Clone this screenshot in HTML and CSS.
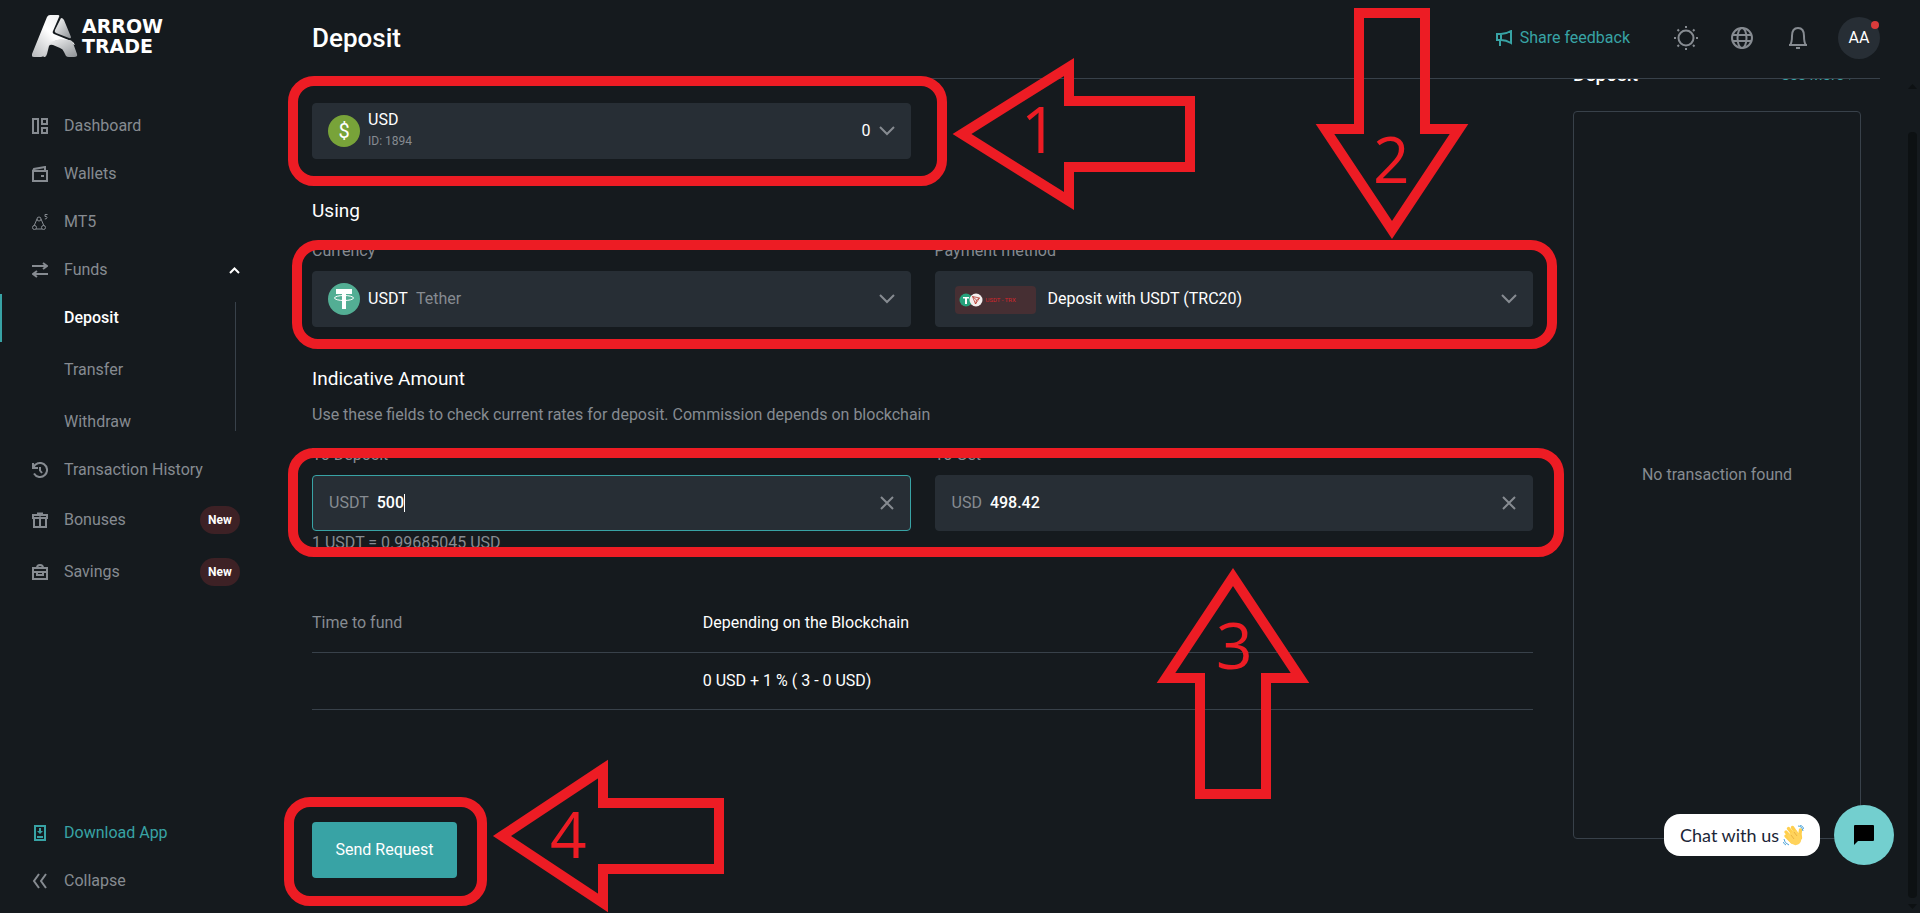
FILE: index.html
```html
<!DOCTYPE html>
<html lang="en">
<head>
  <meta charset="UTF-8">
  <title>Arrow Trade - Deposit</title>
  <meta name="viewport" content="width=device-width,initial-scale=1">
  <link rel="stylesheet" href="styles.css">
</head>
<body>
  <div class="app">
    <aside class="sidebar">
      <a class="logo" href="#">
        <svg width="46" height="42" viewBox="0 0 46 42" aria-hidden="true">
          <defs>
            <linearGradient id="logoLeft" x1="0" y1="1" x2="1" y2="0">
              <stop offset="0" stop-color="#b4b7ba"/><stop offset="0.5" stop-color="#ffffff"/><stop offset="1" stop-color="#e8eaeb"/>
            </linearGradient>
            <linearGradient id="logoRight" x1="0" y1="0" x2="1" y2="1">
              <stop offset="0" stop-color="#ffffff"/><stop offset="1" stop-color="#8d9195"/>
            </linearGradient>
          </defs>
          <path fill="url(#logoLeft)" d="M18 0h8q2 0 1 2l-6 14q-1 2 1 3l17 7q3 1 4 4l-10-4q-5-2-10 0l-4 2q-3 1-4 4l-3 8q-1 2-3 2H2q-3 0-2-3L15 2q1-2 3-2z"/>
          <path fill="url(#logoRight)" d="M29 3q2 0 3 2l7 17q0 2-2 1l-13-5q-2-1-1-3z"/>
          <path fill="url(#logoRight)" d="M17 31q1-2 4-1l7 3q3 1 4 4l2 4q1 1 3 1h5q4 0 3-3l-4-11q-1-3-4-3l-9-1-10 3q-3 1-4 4l-3 9q0 2 1 2h1q1 0 2-3z"/>
        </svg>
        <span>ARROW<br>TRADE</span>
      </a>

      <nav class="nav">
        <a href="#" class="nav-item">
          <svg class="icon" viewBox="0 0 16 16"><path d="M1 1h5v14H1zM10 1h5v5h-5zM10 10h5v5h-5z"/></svg>
          Dashboard
        </a>
        <a href="#" class="nav-item">
          <svg class="icon" viewBox="0 0 16 16"><path d="M1 5h14v10H1zM1 5l1-2 11-2v4"/><path class="fill" d="M9 9h3v2H9z"/></svg>
          Wallets
        </a>
        <a href="#" class="nav-item">
          <svg class="icon thin" viewBox="0 0 16 16"><path d="M5 5l-3 7M9 5l3 7M4 15h6"/><circle cx="7" cy="5" r="2"/><circle cx="2.500" cy="13.500" r="2"/><circle cx="11.500" cy="13.500" r="2"/><path d="M15.500.5h-2.500v2q2-.5 2 1T12.800 5"/></svg>
          MT5
        </a>
        <a href="#" class="nav-item">
          <svg class="icon" viewBox="0 0 16 16"><path d="M0 4h15M11 1l4 3-4 3M16 12H1M5 9l-4 3 4 3"/></svg>
          Funds
          <svg class="caret" width="11" height="7" viewBox="0 0 11 7"><path d="M1 6l4.500-4.500L10 6"/></svg>
        </a>
        <div class="subnav">
          <a href="#" class="nav-item active">Deposit</a>
          <a href="#" class="nav-item">Transfer</a>
          <a href="#" class="nav-item">Withdraw</a>
        </div>
        <a href="#" class="nav-item">
          <svg class="icon" viewBox="0 0 16 16"><path d="M1.500 5.500A7 7 0 1 1 2 11.500M1 1v5h5M8 5v3.500l2 2.500"/></svg>
          Transaction History
        </a>
        <a href="#" class="nav-item tall">
          <svg class="icon" viewBox="0 0 16 16"><path d="M1 3h14v3H1zM2 6h12v9H2zM8 6v9M5 1.500h2.500L8 3l.5-1.500H11"/></svg>
          Bonuses
          <span class="badge">New</span>
        </a>
        <a href="#" class="nav-item tall">
          <svg class="icon" viewBox="0 0 16 16"><path d="M1 4h14v11H1zM5 4q0-3 3-3t3 3M1 8h14M5 8v3h6V8"/></svg>
          Savings
          <span class="badge">New</span>
        </a>
      </nav>

      <div class="nav nav-bottom">
        <a href="#" class="nav-item download">
          <svg class="icon" viewBox="0 0 16 16"><path d="M3 1h10v14H3z"/><path class="fill" d="M7 3h2v3h2L8 9 5 6h2zM5 11h6v2H5z"/></svg>
          Download App
        </a>
        <button type="button" class="nav-item">
          <svg class="icon" viewBox="0 0 16 16"><path d="M7 1L2 8l5 7M14 1L9 8l5 7"/></svg>
          Collapse
        </button>
      </div>
    </aside>

    <main class="main">
      <header class="topbar">
        <h1>Deposit</h1>
        <a href="#" class="feedback">
          <svg width="16" height="16" viewBox="0 0 16 16"><path d="M1 4h4q5 0 10-3v12q-5-3-10-3H1zM4 10v6M5 4v6"/></svg>
          Share feedback
        </a>
        <button type="button" class="tool" aria-label="Theme">
          <svg width="24" height="24" viewBox="0 0 24 24"><circle cx="12" cy="12" r="7.500"/><path d="M12 0v2M12 22v2M0 12h2M22 12h2M3.500 3.500L5 5M19 19l1.500 1.500M3.500 20.500L5 19M19 5l1.500-1.500"/></svg>
        </button>
        <button type="button" class="tool" aria-label="Language">
          <svg width="24" height="24" viewBox="0 0 24 24"><circle cx="12" cy="12" r="10"/><ellipse cx="12" cy="12" rx="4.500" ry="10"/><path d="M2 9h20M2 15h20"/></svg>
        </button>
        <button type="button" class="tool" aria-label="Notifications">
          <svg width="24" height="24" viewBox="0 0 24 24"><path d="M3 19h18M4 19q2-2 2-9Q6 2 12 2t6 8q0 7 2 9M10 22h4"/></svg>
        </button>
        <button type="button" class="avatar">AA<span class="dot"></span></button>
      </header>

      <div class="content">
        <form class="form">
          <div class="row">
            <div class="field select-field">
              <svg width="32" height="32" viewBox="0 0 32 32"><circle cx="16" cy="16" r="16" fill="#78a339"/><text class="dollar" x="16" y="23" text-anchor="middle">$</text></svg>
              <div class="wallet">
                <select aria-label="Wallet"><option>USD</option></select>
                <small>ID: 1894</small>
              </div>
              <span class="balance">0</span>
              <svg class="chevron" width="16" height="10" viewBox="0 0 16 10"><path d="M1 1l7 7 7-7"/></svg>
            </div>
            <div class="mark mark-wallet"></div>
            <svg class="arrow arrow-1" width="244" height="154" viewBox="0 0 244 154">
              <path d="M10 77L117 10v34h121v66H117v34z"/><text x="69" y="96">1</text>
            </svg>
          </div>

          <h2>Using</h2>
          <div class="row">
            <div>
              <label for="currency">Currency</label>
              <div class="field select-field">
                <svg width="32" height="32" viewBox="0 0 32 32"><circle cx="16" cy="16" r="16" fill="#53ae94"/><path fill="#fff" d="M8 6h16v5h-6v15h-4V11H8z"/><ellipse cx="16" cy="15" rx="9.500" ry="2.500" fill="none" stroke="#fff"/></svg>
                <select id="currency"><option>USDT</option></select>
                <span class="muted">Tether</span>
                <svg class="chevron push" width="16" height="10" viewBox="0 0 16 10"><path d="M1 1l7 7 7-7"/></svg>
              </div>
            </div>
            <div>
              <label for="method">Payment method</label>
              <div class="field select-field">
                <span class="method-logo">
                  <svg width="24" height="14" viewBox="0 0 24 14"><circle cx="7" cy="7" r="6.500" fill="#26a17b"/><path fill="#fff" d="M4 4h6v1.500H8V11H6V5.500H4z"/><circle cx="17" cy="7" r="6.500" fill="#f4eeee"/><path d="M13.500 3.500l7 1.500-4 6zM13.500 3.500L17.500 7l3-2M17.500 7l-1 4" fill="none" stroke="#b5382f" stroke-width="0.800"/></svg>
                  USDT - TRX
                </span>
                <select id="method" class="grow"><option>Deposit with USDT (TRC20)</option></select>
                <svg class="chevron" width="16" height="10" viewBox="0 0 16 10"><path d="M1 1l7 7 7-7"/></svg>
              </div>
            </div>
            <div class="mark mark-using"></div>
            <svg class="arrow arrow-2" width="154" height="232" viewBox="0 0 154 232">
              <path d="M44 5h66v116h34L77 222 10 121h34z"/><text x="58" y="175">2</text>
            </svg>
          </div>

          <h2>Indicative Amount</h2>
          <p class="hint">Use these fields to check current rates for deposit. Commission depends on blockchain</p>
          <div class="row">
            <div>
              <label for="toDeposit">To Deposit</label>
              <div class="field focused">
                <span class="muted">USDT</span>
                <input id="toDeposit" class="amount" type="text" value="500">
                <span class="cursor"></span>
                <button type="button" class="clear" aria-label="Clear"><svg width="14" height="14" viewBox="0 0 14 14"><path d="M1 1l12 12M13 1L1 13"/></svg></button>
              </div>
              <p class="rate">1 USDT = 0.99685045 USD</p>
            </div>
            <div>
              <label for="toGet">To Get</label>
              <div class="field">
                <span class="muted">USD</span>
                <input id="toGet" type="text" value="498.42">
                <button type="button" class="clear" aria-label="Clear"><svg width="14" height="14" viewBox="0 0 14 14"><path d="M1 1l12 12M13 1L1 13"/></svg></button>
              </div>
            </div>
            <div class="mark mark-amount"></div>
            <svg class="arrow arrow-3" width="154" height="234" viewBox="0 0 154 234">
              <path d="M77 10l67 101h-34v116H44V111H10z"/><text x="60" y="102">3</text>
            </svg>
          </div>

          <table class="details">
            <tbody>
              <tr><th scope="row">Time to fund</th><td>Depending on the Blockchain</td></tr>
              <tr><th scope="row"></th><td>0 USD + 1 % ( 3 - 0 USD)</td></tr>
            </tbody>
          </table>

          <div class="submit">
            <button type="submit" class="send">Send Request</button>
            <div class="mark mark-submit"></div>
            <svg class="arrow arrow-4" width="234" height="154" viewBox="0 0 234 154">
              <path d="M10 77L111 10v34h116v66H111v34z"/><text x="58" y="99">4</text>
            </svg>
          </div>
        </form>

        <section class="history">
          <div class="history-head">
            <h3>Deposit</h3>
            <a href="#">See More <svg width="7" height="10" viewBox="0 0 7 10"><path d="M1 1l4 4-4 4"/></svg></a>
          </div>
          <div class="history-body">No transaction found</div>
        </section>
      </div>
      <div class="scrollbar"><i class="up"></i><i class="thumb"></i><i class="down"></i></div>
    </main>
  </div>

  <div class="chat">
    <span class="chat-label">Chat with us
      <svg width="21" height="21" viewBox="0 0 21 21">
        <g fill="none" stroke="#ffcf4d" stroke-width="3.400" stroke-linecap="round"><path d="M3 11l6 6M3 7l7 8M5.500 3.500l7 9M9.500 2.500l6 9M17.500 5q-1 4 0 8"/></g>
        <path fill="#ffd35c" d="M4 10l9-5 4 5q3 6-1 9-5 3-9-2z"/>
        <path d="M8 10l3 4M11 7l3 4" fill="none" stroke="#e5a93c" stroke-width="0.800"/>
        <path d="M15 1q4 0 5 5M17 0q3 1 4 4M1 14q0 4 5 6M0 17q1 2 3 3" fill="none" stroke="#4da3d9"/>
      </svg>
    </span>
    <button type="button" class="chat-button" aria-label="Open chat">
      <svg width="20" height="20" viewBox="0 0 20 20"><path d="M1 0h18q1 0 1 1v14q0 1-1 1H4l-4 4V1q0-1 1-1z"/></svg>
    </button>
  </div>
</body>
</html>
```
FILE: styles.css
```css
:root {
  --bg: #151a1e;
  --field: #272e35;
  --line: #38414a;
  --muted: #868b91;
  --teal: #38a3a5;
  --mark: #ed1c24;
}
* { box-sizing: border-box; }
body {
  margin: 0;
  background: var(--bg);
  color: #fff;
  font-family: Roboto, "Liberation Sans", sans-serif;
  font-size: 16px;
  line-height: 24px;
}
h1, h2, h3, p { margin: 0; }
a { color: inherit; text-decoration: none; }
button, input, select { font: inherit; color: inherit; }
button { background: none; border: 0; padding: 0; cursor: pointer; }
svg { display: block; flex: none; }

.app { display: flex; min-height: 100vh; }

/* sidebar */
.sidebar {
  flex: 0 0 264px;
  display: flex;
  flex-direction: column;
  padding-bottom: 8px;
}
.logo {
  display: flex;
  align-items: center;
  gap: 4px;
  margin: 15px 0 45px 32px;
  height: 42px;
  font-family: "DejaVu Sans", sans-serif;
  font-size: 19px;
  font-weight: 700;
  line-height: 20px;
}
.nav { display: flex; flex-direction: column; }
.nav-bottom { margin-top: auto; }
.nav-item {
  display: flex;
  align-items: center;
  gap: 16px;
  height: 48px;
  padding: 0 24px 0 32px;
  color: var(--muted);
}
.nav-item.tall { height: 52px; }
.nav-item.download { color: var(--teal); }
.icon {
  width: 16px; height: 16px;
  fill: none;
  stroke: currentColor;
  stroke-width: 2;
}
.icon.thin { stroke-width: 1; }
.icon .fill { fill: currentColor; stroke: none; }
.caret {
  margin-left: auto;
  fill: none;
  stroke: #fff;
  stroke-width: 2;
}
.subnav {
  position: relative;
  display: flex;
  flex-direction: column;
  gap: 4px;
}
.subnav::after {
  content: "";
  position: absolute;
  top: 8px; right: 28px; bottom: 15px;
  width: 1px;
  background: var(--line);
}
.subnav .nav-item { padding-left: 64px; }
.subnav .active {
  color: #fff;
  font-weight: 500;
  padding-left: 62px;
  border-left: 2px solid var(--teal);
}
.badge {
  margin-left: auto;
  width: 40px;
  border-radius: 14px;
  background: #3d2125;
  color: #fff;
  font-size: 12px;
  font-weight: 700;
  line-height: 28px;
  text-align: center;
}

/* top bar */
.main {
  position: relative;
  flex: 1;
  min-width: 0;
  padding-left: 48px;
}
.topbar {
  position: relative;
  z-index: 2;
  display: flex;
  align-items: center;
  height: 79px;
  margin-right: 40px;
  padding-bottom: 2px;
  background: var(--bg);
  border-bottom: 1px solid var(--line);
}
.topbar h1 { flex: 1; font-size: 26px; font-weight: 500; line-height: 32px; }
.feedback {
  display: flex;
  align-items: center;
  gap: 8px;
  margin-right: 44px;
  color: var(--teal);
}
.feedback svg { fill: none; stroke: currentColor; stroke-width: 2; }
.tool { margin-right: 32px; color: var(--muted); }
.tool svg { fill: none; stroke: currentColor; stroke-width: 2; }
.avatar {
  position: relative;
  width: 42px; height: 42px;
  margin-left: -4px;
  border-radius: 50%;
  background: var(--field);
}
.dot {
  position: absolute;
  top: 4px; right: 1px;
  width: 8px; height: 8px;
  border-radius: 50%;
  background: #d93b3b;
}

/* deposit form */
.content {
  display: flex;
  align-items: flex-start;
  gap: 40px;
  padding-right: 59px;
}
.form { flex: 1; padding-top: 24px; }
.row {
  position: relative;
  display: grid;
  grid-template-columns: 1fr 1fr;
  gap: 24px;
}
.form h2 {
  margin: 36px 0 8px;
  font-size: 19px;
  font-weight: 400;
  line-height: 32px;
}
.form label { display: block; height: 36px; color: var(--muted); line-height: 32px; }
.hint { margin-bottom: 12px; color: var(--muted); }
.rate { height: 24px; color: var(--muted); }
.muted { color: var(--muted); }
.field {
  display: flex;
  align-items: center;
  gap: 8px;
  height: 56px;
  padding: 0 16px;
  border: 1px solid var(--field);
  border-radius: 4px;
  background: var(--field);
}
.field.focused { border-color: var(--teal); }
.select-field { padding: 0 15px; }
.field select, .field input {
  appearance: none;
  min-width: 0;
  padding: 0;
  border: 0;
  outline: 0;
  background: none;
}
.field input { flex: 1; font-weight: 500; }
.field .amount { flex: none; field-sizing: content; width: auto; }
.field .grow { flex: 1; }
.cursor { width: 1px; height: 18px; margin-left: -8px; background: #fff; }
.wallet {
  display: flex;
  flex-direction: column;
  align-items: flex-start;
  padding-bottom: 4px;
}
.wallet small { color: var(--muted); font-size: 12px; line-height: 18px; }
.balance { margin-left: auto; }
.dollar { fill: #fff; font-size: 20px; }
.chevron { fill: none; stroke: var(--muted); stroke-width: 2; }
.push, .clear { margin-left: auto; }
.clear { color: var(--muted); }
.clear svg { fill: none; stroke: currentColor; stroke-width: 2; }
.method-logo {
  display: flex;
  align-items: center;
  gap: 3px;
  width: 81px; height: 28px;
  margin: 2px 4px 0;
  padding-left: 4px;
  border-radius: 4px;
  background: #462f33;
  color: #d4262b;
  font-size: 6px;
}

.details { width: 100%; margin-top: 40px; border-collapse: collapse; }
.details tr { height: 57px; border-bottom: 1px solid var(--line); }
.details th, .details td { padding: 0; font-weight: 400; text-align: left; }
.details th { width: 32%; color: var(--muted); }
.submit { position: relative; margin-top: 112px; }
.send {
  width: 145px; height: 56px;
  border-radius: 4px;
  background: var(--teal);
}

/* deposit history */
.history { flex: 0 0 288px; }
.history-head {
  display: flex;
  justify-content: space-between;
  height: 44px;
  margin-top: -12px;
}
.history-head h3 { font-size: 19px; font-weight: 500; line-height: 16px; }
.history-head a {
  display: flex;
  align-items: center;
  gap: 4px;
  height: 16px;
  margin-right: 6px;
  color: var(--teal);
  font-size: 15px;
  line-height: 16px;
}
.history-head svg { fill: none; stroke: currentColor; stroke-width: 2; }
.history-body {
  display: flex;
  align-items: center;
  justify-content: center;
  height: 728px;
  border: 1px solid var(--line);
  border-radius: 4px;
  color: var(--muted);
}

.scrollbar {
  position: absolute;
  top: 84px; right: 3px; bottom: 4px;
  width: 9px;
  display: flex;
  flex-direction: column;
}
.scrollbar i { background: #0d1113; }
.up { height: 5px; clip-path: polygon(50% 0, 100% 100%, 0 100%); }
.thumb { flex: 1; margin: 43px 0 6px; border-radius: 4px; }
.down { height: 5px; clip-path: polygon(0 0, 100% 0, 50% 100%); }

/* numbered steps drawn over the form */
.mark, .arrow { position: absolute; z-index: 3; pointer-events: none; }
.mark { border: 10px solid var(--mark); border-radius: 26px; }
.mark-wallet { top: -27px; bottom: -27px; left: -24px; width: calc(50% + 48px); }
.mark-using { top: 5px; bottom: -22px; left: -20px; right: -24px; }
.mark-amount { top: 9px; bottom: -2px; left: -24px; right: -31px; }
.mark-submit { top: -25px; left: -28px; width: 203px; height: 109px; }
.arrow path { fill: none; stroke: var(--mark); stroke-width: 10; }
.arrow text { fill: var(--mark); font-family: "Open Sans", sans-serif; font-size: 64px; }
.arrow-1 { top: -46px; left: calc(50% + 29px); }
.arrow-2 { bottom: 87px; right: 64px; }
.arrow-3 { top: 128px; right: 223px; }
.arrow-4 { top: -63px; left: 180px; }

/* chat widget */
.chat {
  position: fixed;
  z-index: 4;
  right: 26px; bottom: 48px;
  display: flex;
  align-items: center;
  gap: 14px;
}
.chat-label {
  display: flex;
  align-items: center;
  gap: 4px;
  height: 42px;
  padding: 0 16px;
  border-radius: 16px;
  background: #fff;
  color: #1b2638;
  font-family: Lato, sans-serif;
  font-size: 18px;
}
.chat-button {
  display: flex;
  align-items: center;
  justify-content: center;
  width: 60px; height: 60px;
  border-radius: 50%;
  background: #73cfcf;
}
```
